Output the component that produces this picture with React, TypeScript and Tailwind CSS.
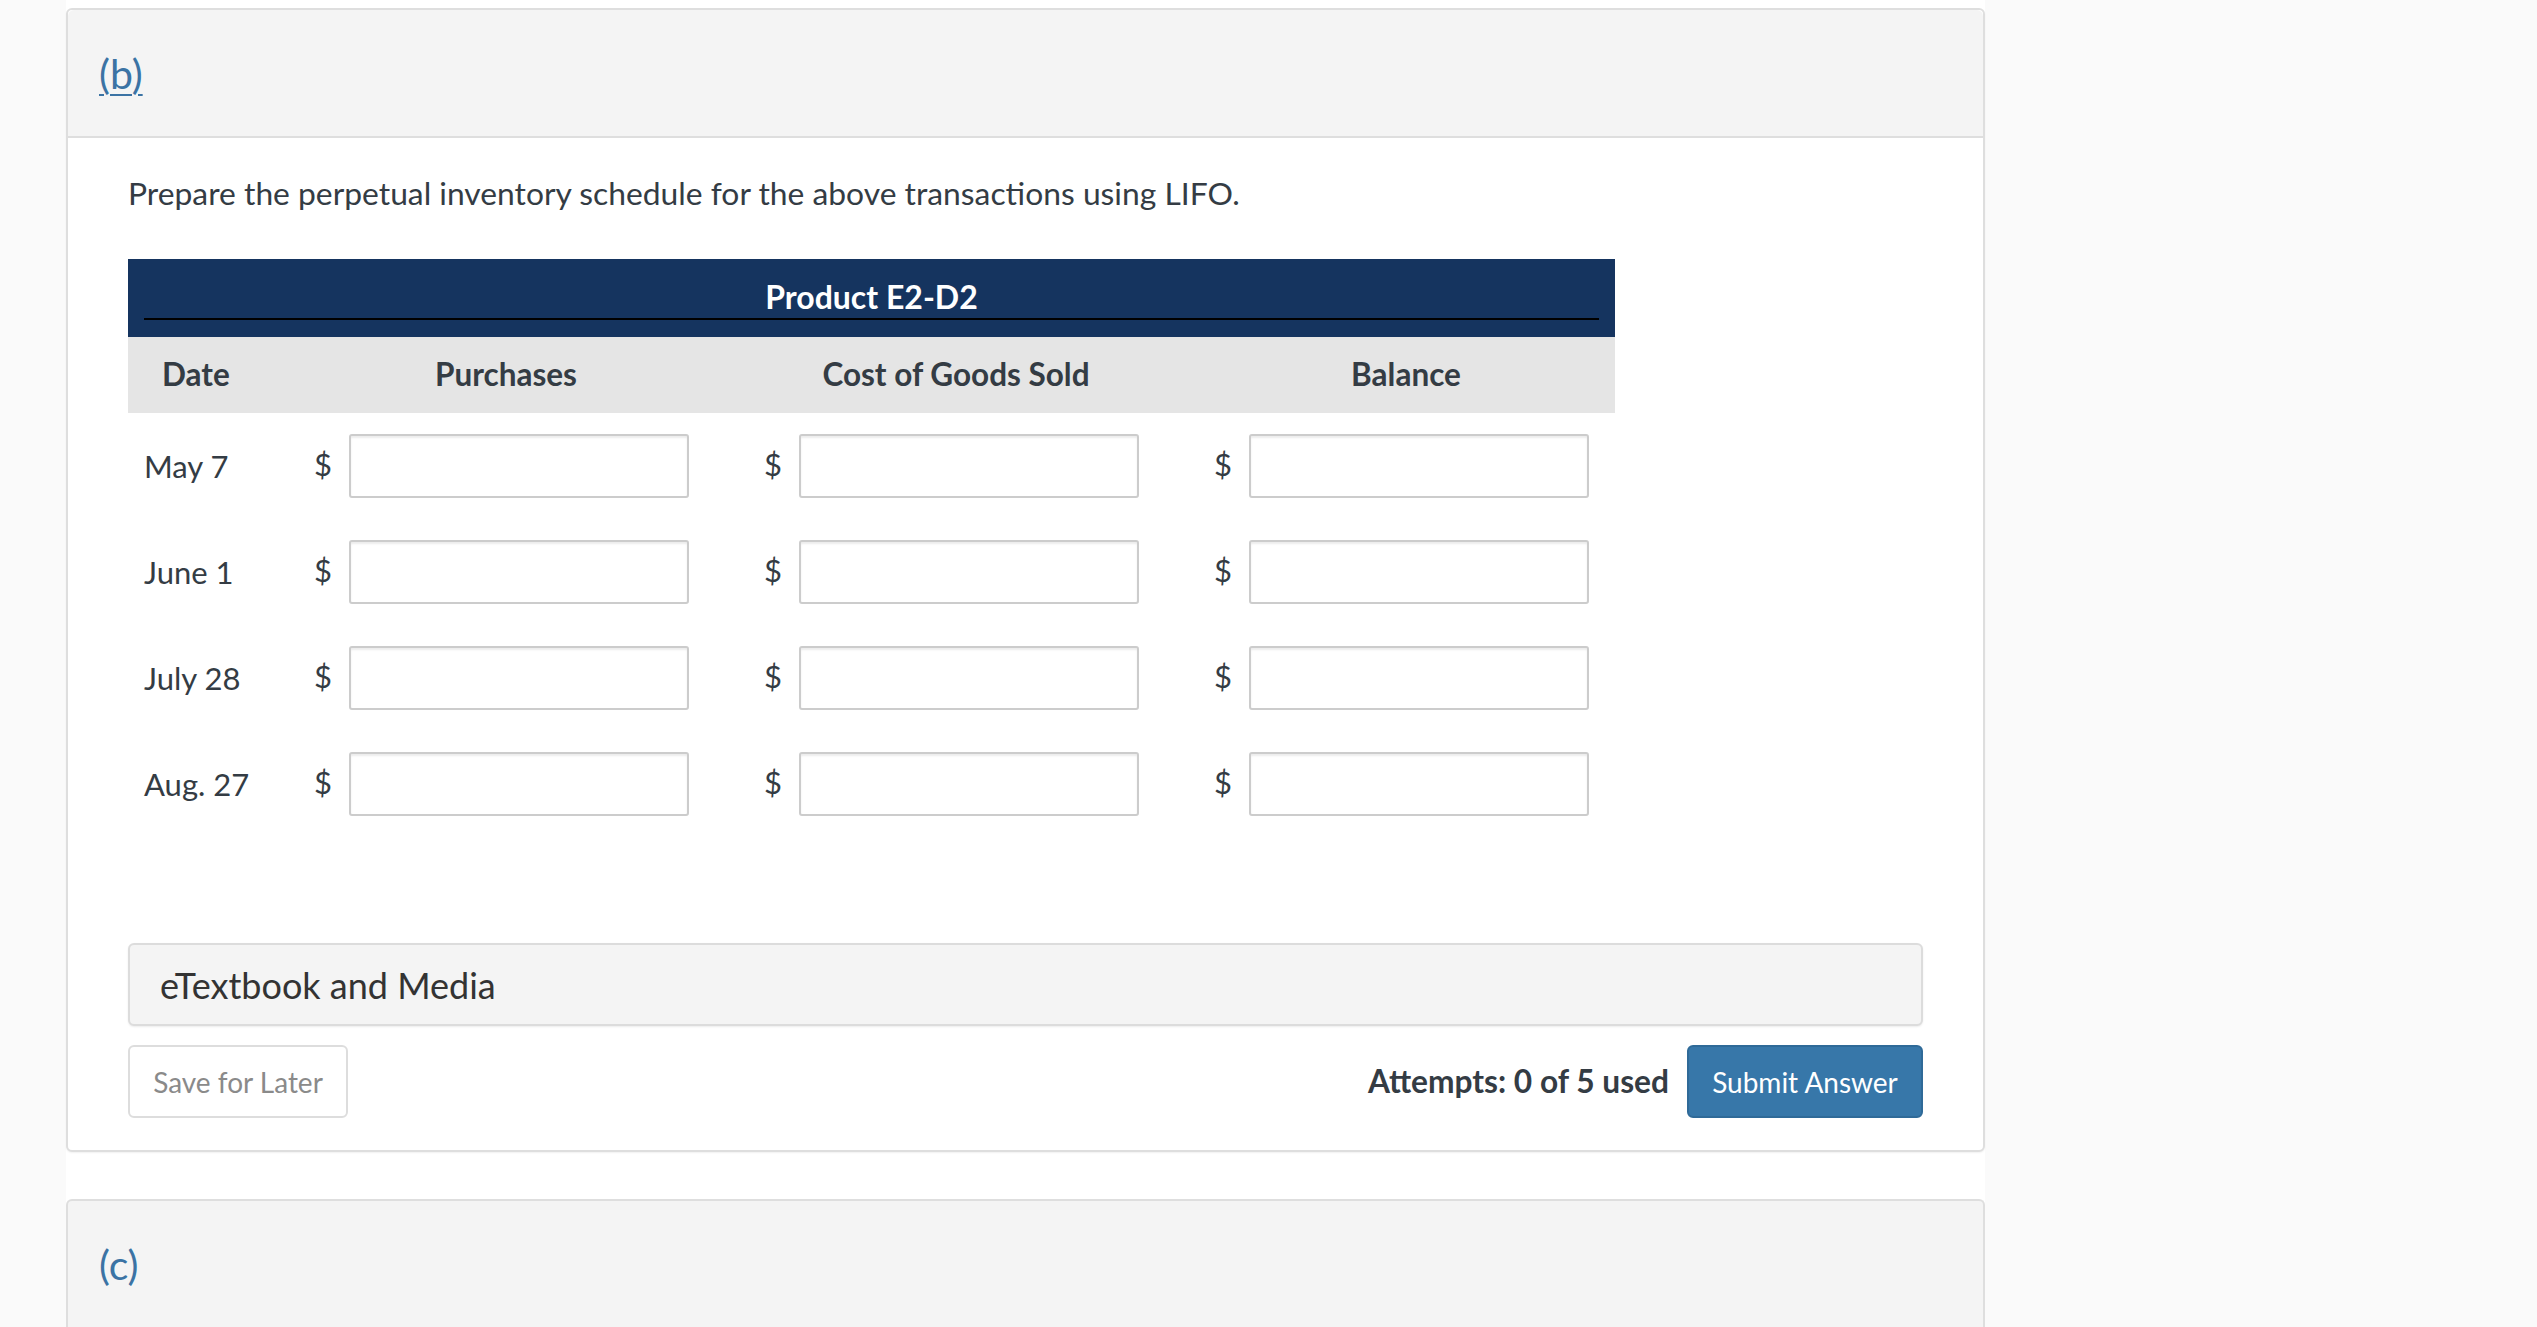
import React from "react";

const dates = ["May 7", "June 1", "July 28", "Aug. 27"];

function MoneyCell() {
  return (
    <div className="flex w-[450px] shrink-0 items-center pl-[14px]">
      <span className="w-[35px] shrink-0 text-[31px] leading-none text-[#343c44] -mt-[4px]">$</span>
      <div className="h-[64px] w-[340px] shrink-0 rounded-[3px] border-2 border-[#cccccc] bg-white shadow-[inset_0_2px_2px_rgba(0,0,0,0.08)]" />
    </div>
  );
}

export default function App() {
  return (
    <div
      className="min-h-screen w-full bg-[#fafafa]"
      style={{ fontFamily: "Lato, 'Open Sans', 'Liberation Sans', sans-serif" }}
    >
      <div className="ml-[66px] w-[1919px] bg-white pt-[8px] pb-[40px]">
        {/* Card (b) */}
        <div className="rounded-[6px] border-2 border-[#dedede] bg-white shadow-[0_1px_2px_rgba(0,0,0,0.06)]">
          <div className="flex h-[128px] items-center rounded-t-[6px] border-b-2 border-[#dedede] bg-[#f4f4f4] pl-[31px]">
            <span className="text-[41px] leading-none text-[#3b73a4] underline decoration-2 underline-offset-[5px]">(b)</span>
          </div>
          <div className="px-[60px] pt-[35px] pb-[32px]">
            <p className="text-[31.8px] leading-[40px] text-[#343c44]">
              Prepare the perpetual inventory schedule for the above transactions using LIFO.
            </p>

            {/* Table */}
            <div className="mt-[46px] w-[1487px]">
              <div className="bg-[#15345f] px-[16px] pt-[17px] pb-[17px]">
                <div className="border-b-2 border-black text-center text-[32px] font-bold leading-[42px] text-white">
                  Product E2-D2
                </div>
              </div>
              <div className="flex h-[76px] items-center bg-[#e5e5e5] text-[31.5px] font-bold text-[#343c44]">
                <div className="w-[153px] shrink-0 pl-[34px]">Date</div>
                <div className="w-[450px] shrink-0 text-center">Purchases</div>
                <div className="w-[450px] shrink-0 text-center">Cost of Goods Sold</div>
                <div className="flex-1 pl-[16px] text-center">Balance</div>
              </div>
              {dates.map((d) => (
                <div key={d} className="flex items-center py-[21px]">
                  <div className="w-[172px] shrink-0 pl-[16px] text-[31px] leading-none text-[#343c44]">{d}</div>
                  <MoneyCell />
                  <MoneyCell />
                  <MoneyCell />
                </div>
              ))}
            </div>

            {/* eTextbook */}
            <div className="mt-[106px] flex h-[83px] items-center rounded-[6px] border-2 border-[#dcdcdc] bg-[#f4f4f4] pl-[30px] shadow-[0_1px_2px_rgba(0,0,0,0.08)]">
              <span className="text-[36px] leading-none text-[#333333]">eTextbook and Media</span>
            </div>

            <div className="mt-[19px] flex items-center justify-between">
              <button className="flex h-[73px] w-[220px] items-center justify-center rounded-[6px] border-2 border-[#dddddd] bg-white text-[28px] text-[#8a8a8a]">
                Save for Later
              </button>
              <div className="flex items-center gap-[18px]">
                <span className="text-[31.7px] font-bold text-[#343c44]">Attempts: 0 of 5 used</span>
                <button className="flex h-[73px] w-[236px] items-center justify-center rounded-[6px] border-2 border-[#2f6a98] bg-[#3777a9] text-[28px] text-white">
                  Submit Answer
                </button>
              </div>
            </div>
          </div>
        </div>

        {/* Card (c) */}
        <div className="mt-[47px] h-[200px] rounded-t-[6px] border-2 border-b-0 border-[#dedede] bg-[#f4f4f4] pl-[31px] pt-[43px]">
          <span className="text-[41px] leading-none text-[#3b73a4]">(c)</span>
        </div>
      </div>
    </div>
  );
}
